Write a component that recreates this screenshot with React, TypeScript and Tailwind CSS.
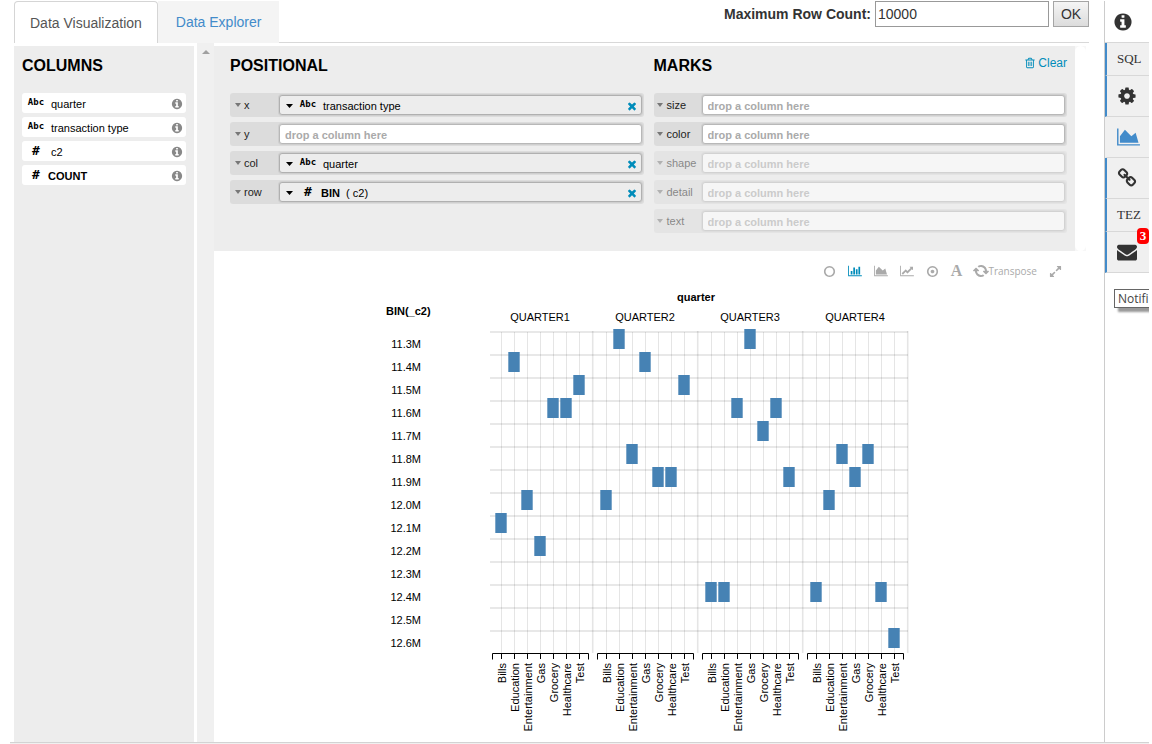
import { useState, type ReactNode } from "react";

const ICONS = {
  info: "M1152 1376v-160q0-14-9-23t-23-9h-96v-512q0-14-9-23t-23-9h-320q-14 0-23 9t-9 23v160q0 14 9 23t23 9h96v320h-96q-14 0-23 9t-9 23v160q0 14 9 23t23 9h448q14 0 23-9t9-23zm-128-896v-160q0-14-9-23t-23-9h-192q-14 0-23 9t-9 23v160q0 14 9 23t23 9h192q14 0 23-9t9-23zm640 416q0 209-103 385.5t-279.5 279.5-385.5 103-385.5-103-279.5-279.5-103-385.5 103-385.5 279.5-279.5 385.5-103 385.5 103 279.5 279.5 103 385.5z",
  cog: "M1152 896q0-106-75-181t-181-75-181 75-75 181 75 181 181 75 181-75 75-181zm512-109v222q0 12-8 23t-20 13l-185 28q-19 54-39 91 35 50 107 138 10 12 10 25t-9 23q-27 37-99 108t-94 71q-12 0-26-9l-138-108q-44 23-91 38-16 136-29 186-7 28-36 28h-222q-14 0-24.5-8.5t-11.5-21.5l-28-184q-49-16-90-37l-141 107q-10 9-25 9-14 0-25-11-126-114-165-168-7-10-7-23 0-12 8-23 15-21 51-66.5t54-70.5q-27-50-41-99l-183-27q-13-2-21-12.5t-8-23.5v-222q0-12 8-23t19-13l186-28q14-46 39-92-40-57-107-138-10-12-10-24 0-10 9-23 26-36 98.5-107.5t94.5-71.5q13 0 26 10l138 107q44-23 91-38 16-136 29-186 7-28 36-28h222q14 0 24.5 8.5t11.5 21.5l28 184q49 16 90 37l142-107q9-9 24-9 13 0 25 10 129 119 165 170 7 8 7 22 0 12-8 23-15 21-51 66.5t-54 70.5q26 50 41 98l183 28q13 2 21 12.5t8 23.5z",
  area: "M2048 1536v128h-2048v-1536h128v1408h1920zm-384-1024l256 896h-1664v-576l448-576 576 576z",
  bar: "M640 896v512h-256v-512h256zm384-512v1024h-256v-1024h256zm1024 1152v128h-2048v-1536h128v1408h1920zm-640-896v768h-256v-768h256zm384-384v1152h-256v-1152h256z",
  line: "M2048 1536v128h-2048v-1536h128v1408h1920zm-128-1248v435q0 21-19.5 29.5t-35.5-7.5l-121-121-633 633q-10 10-23 10t-23-10l-233-233-416 416-192-192 585-585q10-10 23-10t23 10l233 233 464-464-121-121q-16-16-7.5-35.5t29.5-19.5h435q14 0 23 9t9 23z",
  envelope: "M1792 710v794q0 66-47 113t-113 47h-1472q-66 0-113-47t-47-113v-794q44 49 101 87 362 246 497 345 57 42 92.5 65.5t94.5 48 110 24.5h2q51 0 110-24.5t94.5-48 92.5-65.5q170-123 498-345 57-39 100-87zm0-294q0 79-49 151t-122 123q-376 261-468 325-10 7-42.5 31t-54 38.5-52 32.5-57.5 27-50 9h-2q-23 0-50-9t-57.5-27-52-32.5-54-38.5-42.5-31q-91-64-262-182.5t-205-142.5q-62-42-117-115.5t-55-136.5q0-78 41.5-130t118.5-52h1472q65 0 112.5 47t47.5 113z",
  chain: "M1520 1216q0-40-28-68l-208-208q-28-28-68-28-42 0-72 32 3 3 19 18.5t21.5 21.5 15 19 13 25.5 3.5 27.5q0 40-28 68t-68 28q-15 0-27.5-3.5t-25.5-13-19-15-21.5-21.5-18.5-19q-33 31-33 73 0 40 28 68l206 207q27 27 68 27 40 0 68-26l147-146q28-28 28-67zm-703-705q0-40-28-68l-206-207q-28-28-68-28-39 0-68 27l-147 146q-28 28-28 67 0 40 28 68l208 208q27 27 68 27 42 0 72-31-3-3-19-18.5t-21.5-21.5-15-19-13-25.5-3.5-27.5q0-40 28-68t68-28q15 0 27.5 3.5t25.5 13 19 15 21.5 21.5 18.5 19q33-31 33-73zm895 705q0 120-85 203l-147 146q-83 83-203 83-121 0-204-85l-206-207q-83-83-83-203 0-123 88-209l-88-88q-86 88-208 88-120 0-204-84l-208-208q-84-84-84-204t85-203l147-146q83-83 203-83 121 0 204 85l206 207q83 83 83 203 0 123-88 209l88 88q86-88 208-88 120 0 204 84l208 208q84 84 84 204z",
  circle: "M896 352q-148 0-273 73t-198 198-73 273 73 273 198 198 273 73 273-73 198-198 73-273-73-273-198-198-273-73zm768 544q0 209-103 385.5t-279.5 279.5-385.5 103-385.5-103-279.5-279.5-103-385.5 103-385.5 279.5-279.5 385.5-103 385.5 103 279.5 279.5 103 385.5z",
  dot: "M1152 896q0 106-75 181t-181 75-181-75-75-181 75-181 181-75 181 75 75 181zm-256-544q-148 0-273 73t-198 198-73 273 73 273 198 198 273 73 273-73 198-198 73-273-73-273-198-198-273-73zm768 544q0 209-103 385.5t-279.5 279.5-385.5 103-385.5-103-279.5-279.5-103-385.5 103-385.5 279.5-279.5 385.5-103 385.5 103 279.5 279.5 103 385.5z",
  refresh: "M1639 1056q0 5-1 7-64 268-268 434.5t-478 166.5q-146 0-282.5-55t-243.5-157l-129 129q-19 19-45 19t-45-19-19-45v-448q0-26 19-45t45-19h448q26 0 45 19t19 45-19 45l-137 137q71 66 161 102t187 36q134 0 250-65t186-179q11-17 53-117 8-23 30-23h192q13 0 22.5 9.5t9.5 22.5zm25-800v448q0 26-19 45t-45 19h-448q-26 0-45-19t-19-45 19-45l138-138q-148-137-349-137-134 0-250 65t-186 179q-11 17-53 117-8 23-30 23h-199q-13 0-22.5-9.5t-9.5-22.5v-7q65-268 270-434.5t480-166.5q146 0 284 55.5t245 156.5l130-129q19-19 45-19t45 19 19 45z",
  close: "M1490 1322q0 40-28 68l-136 136q-28 28-68 28t-68-28l-294-294-294 294q-28 28-68 28t-68-28l-136-136q-28-28-28-68t28-68l294-294-294-294q-28-28-28-68t28-68l136-136q28-28 68-28t68 28l294 294 294-294q28-28 68-28t68 28l136 136q28 28 28 68t-28 68l-294 294 294 294q28 28 28 68z",
  trash: "M704 736v576q0 14-9 23t-23 9h-64q-14 0-23-9t-9-23v-576q0-14 9-23t23-9h64q14 0 23 9t9 23zm256 0v576q0 14-9 23t-23 9h-64q-14 0-23-9t-9-23v-576q0-14 9-23t23-9h64q14 0 23 9t9 23zm256 0v576q0 14-9 23t-23 9h-64q-14 0-23-9t-9-23v-576q0-14 9-23t23-9h64q14 0 23 9t9 23zm128 724v-948h-896v948q0 22 7 40.5t14.5 27 10.5 8.5h832q3 0 10.5-8.5t14.5-27 7-40.5zm-672-1076h448l-48-117q-7-9-17-11h-317q-10 2-17 11zm928 32v64q0 14-9 23t-23 9h-96v948q0 83-47 143.5t-113 60.5h-832q-66 0-113-58.5t-47-141.5v-952h-96q-14 0-23-9t-9-23v-64q0-14 9-23t23-9h309l70-167q15-37 54-63t79-26h320q40 0 79 26t54 63l70 167h309q14 0 23 9t9 23z",
  expand: "M883 1056q0 13-10 23l-332 332 144 144q19 19 19 45t-19 45-45 19h-448q-26 0-45-19t-19-45v-448q0-26 19-45t45-19 45 19l144 144 332-332q10-10 23-10t23 10l114 114q10 10 10 23zm781-864v448q0 26-19 45t-45 19-45-19l-144-144-332 332q-10 10-23 10t-23-10l-114-114q-10-10-10-23t10-23l332-332-144-144q-19-19-19-45t19-45 45-19h448q26 0 45 19t19 45z",
};

const WIDE = ["area", "bar", "line"];

function Icon({ name, className }: { name: keyof typeof ICONS; className: string }) {
  return (
    <svg viewBox={WIDE.includes(name) ? "0 0 2048 1792" : "0 0 1792 1792"} className={`shrink-0 fill-current ${className}`} aria-hidden="true">
      <path d={ICONS[name]} />
    </svg>
  );
}

function Caret({ className }: { className: string }) {
  return (
    <svg viewBox="0 0 6 4" preserveAspectRatio="none" className={`h-1 shrink-0 fill-current ${className}`} aria-hidden="true">
      <path d="M0 0H6L3 4Z" />
    </svg>
  );
}

function TypeIcon({ type }: { type: "text" | "number" }) {
  return type === "text" ? (
    <span className="w-5 shrink-0 pb-0.5 text-center font-['DejaVu_Sans_Mono',monospace] text-[9px] leading-3 font-bold text-black">Abc</span>
  ) : (
    <span className="w-5 shrink-0 text-center font-['DejaVu_Sans_Mono',monospace] text-[13px] leading-4 font-bold text-black">#</span>
  );
}

function ColumnItem({ name, type, bold }: { name: string; type: "text" | "number"; bold?: boolean }) {
  return (
    <li className="flex h-5 items-center rounded-[3px] bg-white pr-[3px] pl-1 text-[11px]">
      <TypeIcon type={type} />
      <span className={`flex-1 pt-0.5 ${bold ? "pl-0.5 font-bold" : "pl-[5px]"}`}>{name}</span>
      <button aria-label={`About ${name}`} className="pt-0.5 text-[#888]">
        <Icon name="info" className="size-3" />
      </button>
    </li>
  );
}

type ShelfProps = { label: string; type?: "text" | "number"; compact?: boolean; disabled?: boolean; children?: ReactNode };

function Shelf({ label, type, compact, disabled, children }: ShelfProps) {
  const box = "h-5 min-w-0 flex-1 rounded-[3px] border shadow-[0_0_0_1px_#cfcfcf]";
  return (
    <div className={`flex h-6 items-center rounded-[3px] bg-[#dcdcdc] pr-0.5 text-[11px] ${disabled ? "opacity-50" : ""}`}>
      <button disabled={disabled} className={`flex h-full shrink-0 items-center text-[#222] ${compact ? "w-12 gap-1 pl-[3px]" : "w-[49px] gap-[3px] pl-[5px]"}`}>
        <Caret className="w-1.5 text-[#777]" />
        {label}
      </button>
      {type ? (
        <div className={`${box} flex items-center border-[#b0b0b0] bg-[#ededed] pr-[3px] pl-1.5`}>
          <button aria-label={`${label} options`} className="mr-[5px] pt-0.5">
            <Caret className="w-[7px] text-black" />
          </button>
          <TypeIcon type={type} />
          <span className={`flex-1 pt-0.5 ${type === "number" ? "pl-[3px]" : "pl-[5px]"}`}>{children}</span>
          <button aria-label={`Remove ${label}`} className="pt-0.5 text-[#008cba]">
            <Icon name="close" className="size-3" />
          </button>
        </div>
      ) : (
        <input
          aria-label={label}
          disabled={disabled}
          placeholder="drop a column here"
          className={`${box} border-[#b8b8b8] bg-white pt-0.5 pl-[5px] font-bold outline-none placeholder:text-[#aaa]`}
        />
      )}
    </div>
  );
}

const QUARTERS = ["QUARTER1", "QUARTER2", "QUARTER3", "QUARTER4"];
const TYPES = ["Bills", "Education", "Entertainment", "Gas", "Grocery", "Healthcare", "Test"];
const BINS = ["11.3M", "11.4M", "11.5M", "11.6M", "11.7M", "11.8M", "11.9M", "12.0M", "12.1M", "12.2M", "12.3M", "12.4M", "12.5M", "12.6M"];
// Bin index of each transaction type, one row per quarter.
const CELLS = [
  [8, 1, 7, 9, 3, 3, 2],
  [7, 0, 5, 1, 6, 6, 2],
  [11, 11, 3, 0, 4, 3, 6],
  [11, 7, 5, 6, 5, 11, 13],
];

function Chart() {
  return (
    <svg viewBox="0 5 540 447" className="h-[447px] w-[540px] shrink-0 font-['Liberation_Sans',Arial,sans-serif] text-[11px]" role="img" aria-label="Transaction type by quarter">
      <text x="6" y="29" className="font-bold">BIN(_c2)</text>
      <text x="316" y="15" textAnchor="middle" className="font-bold">quarter</text>
      {BINS.map((bin, i) => (
        <g key={bin}>
          <text x="41" y={62 + i * 23} textAnchor="end">{bin}</text>
          <path d={`M110 ${46 + i * 23}H528`} stroke="#000" strokeOpacity="0.09" strokeWidth="2" />
        </g>
      ))}
      {QUARTERS.map((quarter, q) => (
        <g key={quarter} transform={`translate(${q * 105} 0)`}>
          <text x="160" y="35" textAnchor="middle">{quarter}</text>
          <path d="M212.7 45V367" stroke="#000" strokeOpacity="0.1" strokeWidth="1.6" />
          {TYPES.map((type, t) => (
            <g key={type} transform={`translate(${121 + t * 13} 0)`}>
              <path d="M.5 46V367" stroke="#000" strokeOpacity="0.1" />
              <rect x="-5.7" y={43 + CELLS[q][t] * 23} width="11.4" height="20" fill="#4682b4" />
              <path d="M.5 367V373" stroke="#000" />
              <text transform="translate(5 377) rotate(-90)" textAnchor="end">{type}</text>
            </g>
          ))}
          <path d="M112.5 373.5V367.5H208.5V373.5" fill="none" stroke="#000" />
        </g>
      ))}
    </svg>
  );
}

function RailItem({ label, active, short, children }: { label: string; active?: boolean; short?: boolean; children: ReactNode }) {
  return (
    <button
      aria-label={label}
      className={`relative flex items-center border-b border-b-[#d8d8d8] bg-[#f0f0f0] pl-2.5 text-[#333] ${short ? "h-[33px]" : "h-[41px]"} ${active ? "border-l-2 border-l-[#f0f0f0] text-[#428bca]" : "border-l-2 border-l-[#428bca]"}`}
    >
      {children}
    </button>
  );
}

export default function App() {
  const [rows, setRows] = useState("10000");
  return (
    <div className="flex min-h-screen flex-col bg-white pr-[3px] pl-2.5 font-['Liberation_Sans',Arial,sans-serif] text-black">
      <div className="flex flex-1 border-b border-[#d3d3d3] pl-1">
        <main className="flex min-w-0 flex-1 flex-col">
          <header className="mr-[15px] flex h-[43px] items-start justify-between pt-px">
            <nav className="flex h-[42px] shrink-0 text-sm">
              <a href="#visualization" className="flex items-center rounded-t border border-b-0 border-[#d5d5d5] px-[15px] text-[#555]">Data Visualization</a>
              <a href="#explorer" className="flex items-center bg-[#f4f4f4] px-[18px] text-[#428bca]">Data Explorer</a>
            </nav>
            <form className="flex h-[42px] flex-1 items-start justify-end border-b border-[#d8d8d8] text-sm text-[#333]" onSubmit={(e) => e.preventDefault()}>
              <label htmlFor="rows" className="mr-1 leading-[26px] font-bold">Maximum Row Count:</label>
              <input id="rows" value={rows} onChange={(e) => setRows(e.target.value)} className="mr-1 h-[26px] w-[174px] border border-[#999] bg-white px-0.5 outline-none" />
              <button className="h-[26px] w-9 border border-[#a5a5a5] bg-linear-to-b from-[#f5f5f5] to-[#dcdcdc]">OK</button>
            </form>
          </header>
          <div className="flex flex-1">
            <aside className="mt-[3px] mr-[3px] w-[180px] shrink-0 bg-[#ededed] px-2 pt-2">
              <h2 className="mb-4 text-base leading-[23px] font-bold">COLUMNS</h2>
              <ul className="flex flex-col gap-1">
                <ColumnItem name="quarter" type="text" />
                <ColumnItem name="transaction type" type="text" />
                <ColumnItem name="c2" type="number" />
                <ColumnItem name="COUNT" type="number" bold />
              </ul>
            </aside>
            <div className="flex w-[17px] shrink-0 justify-center bg-[#f0f0f0] pt-[7px]">
              <Caret className="w-2 rotate-180 text-[#a0a0a0]" />
            </div>
            <div className="flex min-w-0 flex-1 flex-col">
              <div className="mt-[3px] mr-[18px] flex bg-[#f7f7f7]">
                <div className="grid h-[205px] flex-1 grid-cols-2 gap-x-2.5 bg-[#ededed] pt-2 pr-2 pl-4">
                  <section>
                    <h2 className="mb-4 text-base leading-[23px] font-bold">POSITIONAL</h2>
                    <div className="flex flex-col gap-[5px]">
                      <Shelf label="x" type="text">transaction type</Shelf>
                      <Shelf label="y" />
                      <Shelf label="col" type="text">quarter</Shelf>
                      <Shelf label="row" type="number"><b>BIN</b>&nbsp; ( c2)</Shelf>
                    </div>
                  </section>
                  <section>
                    <div className="mb-4 flex justify-between leading-[23px]">
                      <h2 className="text-base leading-[23px] font-bold">MARKS</h2>
                      <button className="flex h-[18px] items-center gap-0.5 text-xs text-[#008cba]">
                        <Icon name="trash" className="size-3" />
                        Clear
                      </button>
                    </div>
                    <div className="flex flex-col gap-[5px]">
                      <Shelf label="size" compact />
                      <Shelf label="color" compact />
                      <Shelf label="shape" compact disabled />
                      <Shelf label="detail" compact disabled />
                      <Shelf label="text" compact disabled />
                    </div>
                  </section>
                </div>
                <div className="w-[11px] rounded-lg bg-white" />
              </div>
              <div className="mr-[42px] flex h-10 items-center justify-end gap-3 text-[#aaa]">
                <button aria-label="Point"><Icon name="circle" className="size-[13px]" /></button>
                <button aria-label="Bar" className="text-[#008cba]"><Icon name="bar" className="h-3 w-3.5" /></button>
                <button aria-label="Area"><Icon name="area" className="h-3 w-3.5" /></button>
                <button aria-label="Line"><Icon name="line" className="h-3 w-3.5" /></button>
                <button aria-label="Dot"><Icon name="dot" className="size-[13px]" /></button>
                <button aria-label="Text" className="font-['Liberation_Serif',serif] text-base leading-4 font-bold">A</button>
                <button className="flex items-center font-['Open_Sans',sans-serif] text-[10px]">
                  <Icon name="refresh" className="size-3.5 rotate-45" />
                  Transpose
                </button>
                <button aria-label="Expand"><Icon name="expand" className="size-[13px]" /></button>
              </div>
              <div className="pl-[166px]">
                <Chart />
              </div>
            </div>
          </div>
        </main>
        <aside className="relative mt-px flex w-[45px] shrink-0 flex-col overflow-hidden border-l border-[#ccc] font-['Liberation_Serif',serif] text-[13px]">
          <button aria-label="Info" className="flex h-[42px] items-center border-b border-[#d8d8d8] pl-2 text-[#333]">
            <Icon name="info" className="size-5" />
          </button>
          <RailItem label="SQL" short>SQL</RailItem>
          <RailItem label="Settings"><Icon name="cog" className="size-5" /></RailItem>
          <RailItem label="Chart" active><Icon name="area" className="h-5 w-[23px]" /></RailItem>
          <RailItem label="Links"><Icon name="chain" className="size-5" /></RailItem>
          <RailItem label="TEZ" short>TEZ</RailItem>
          <RailItem label="Notifications">
            <Icon name="envelope" className="size-5" />
            <span className="absolute -top-1 right-0 flex h-4 w-3 items-center justify-center rounded bg-[red] text-[13px] font-bold text-white">3</span>
          </RailItem>
          <div role="tooltip" className="mt-4 ml-[9px] h-[19px] border border-r-0 border-[#666] bg-white pl-[3px] font-['Open_Sans',sans-serif] text-xs leading-[17px] text-[#444] shadow-[4px_4px_2px_#999]">
            Notifi
          </div>
        </aside>
      </div>
      <div className="h-px bg-[#f0f0f0]" />
    </div>
  );
}
